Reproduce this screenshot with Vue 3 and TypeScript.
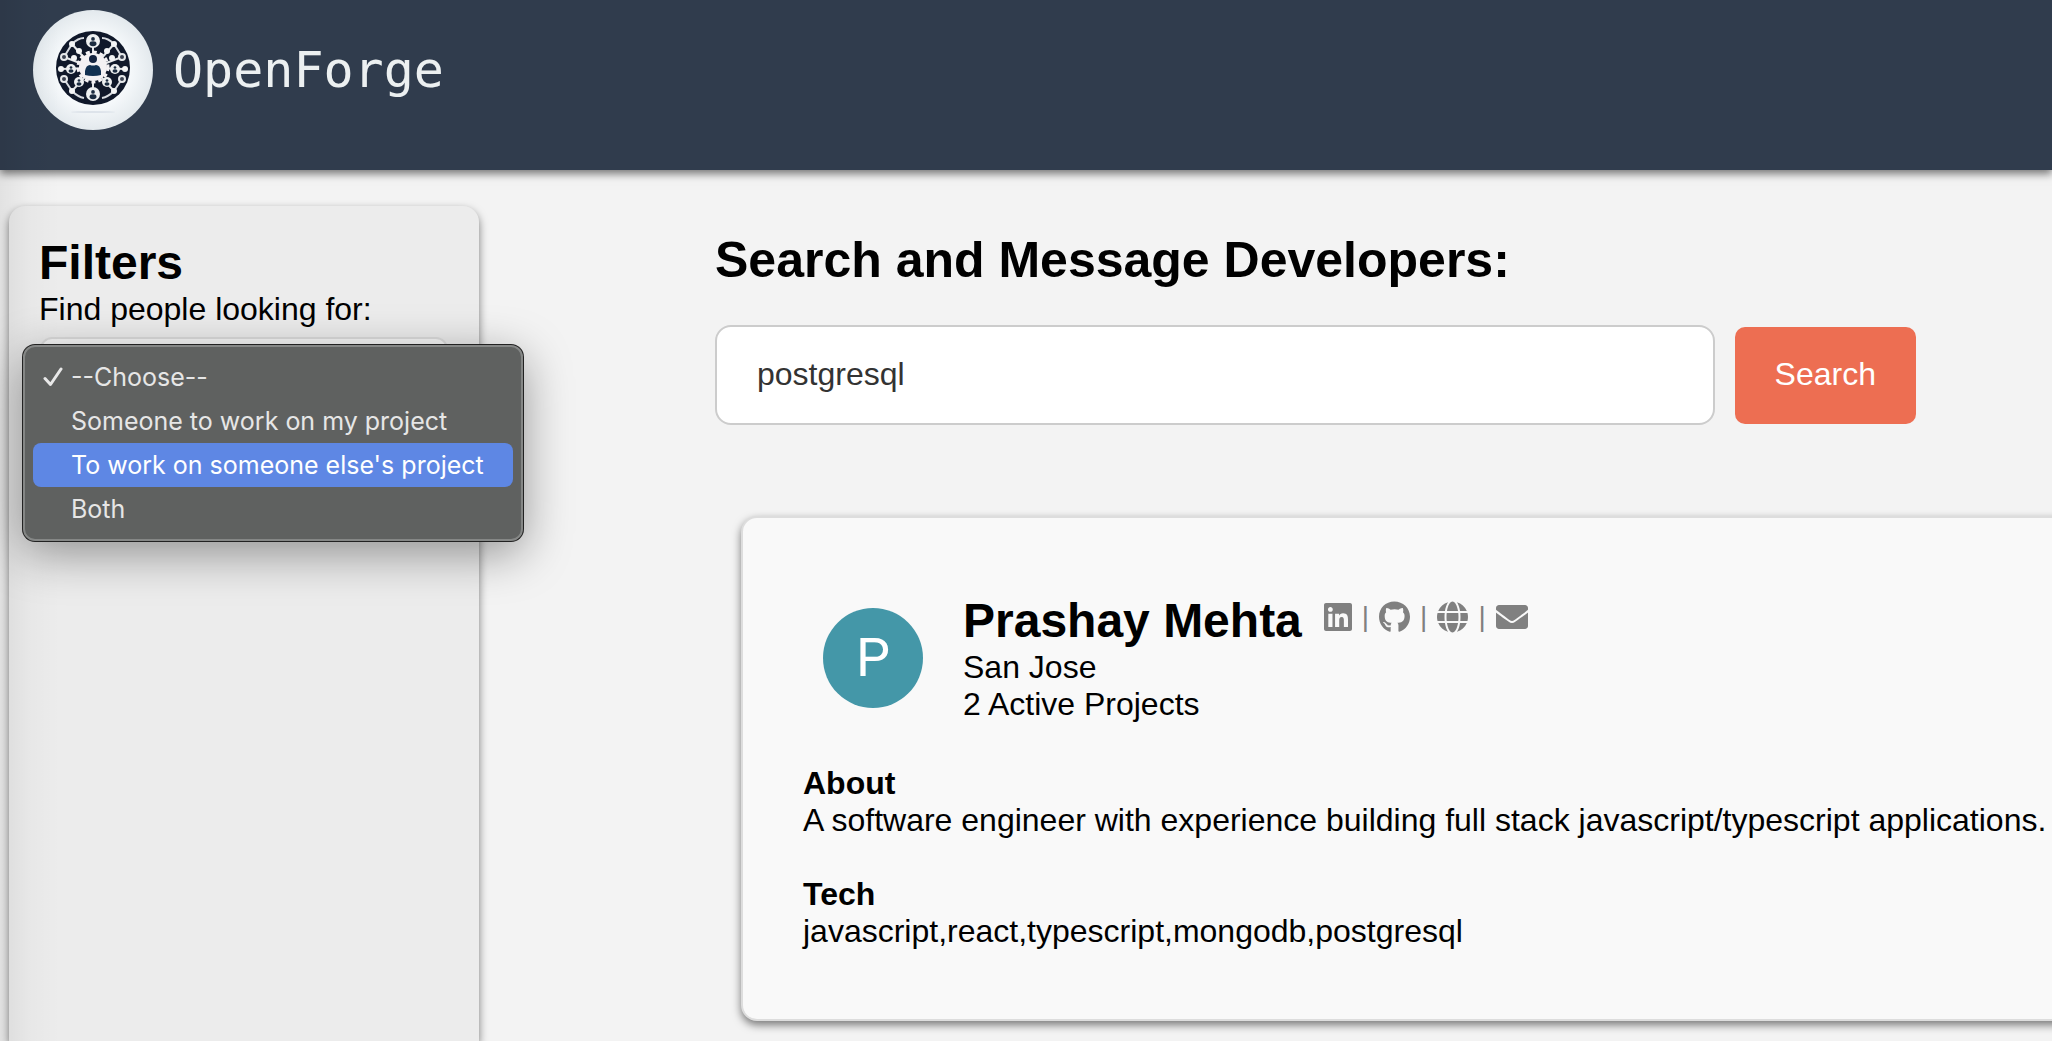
<script setup lang="ts">
import { ref } from 'vue'

interface Option {
  value: string
  label: string
}

interface ProfileLink {
  name: string
  viewBox: string
  width: number
  path: string
}

const options: Option[] = [
  { value: '', label: '--Choose--' },
  { value: 'find', label: 'Someone to work on my project' },
  { value: 'join', label: "To work on someone else's project" },
  { value: 'both', label: 'Both' },
]

const selected = ref('')
const hovered = ref('join')
const query = ref('postgresql')

const links: ProfileLink[] = [
  {
    name: 'LinkedIn',
    viewBox: '0 0 448 512',
    width: 28,
    path: 'M416 32H31.900C14.300 32 0 46.500 0 64.300v383.400C0 465.500 14.300 480 31.900 480H416c17.600 0 32-14.500 32-32.300V64.300c0-17.800-14.400-32.300-32-32.300zM135.400 416H69V202.200h66.500V416zm-33.200-243c-21.300 0-38.500-17.300-38.500-38.500S80.900 96 102.200 96c21.200 0 38.500 17.300 38.500 38.500 0 21.300-17.200 38.500-38.500 38.500zm282.100 243h-66.400V312c0-24.800-.5-56.700-34.500-56.700-34.600 0-39.900 27-39.900 54.900V416h-66.400V202.200h63.700v29.200h.9c8.900-16.800 30.600-34.500 62.900-34.500 67.200 0 79.700 44.300 79.700 101.900V416z',
  },
  {
    name: 'GitHub',
    viewBox: '0 0 496 512',
    width: 31,
    path: 'M165.900 397.400c0 2-2.300 3.600-5.200 3.600-3.300.3-5.600-1.300-5.600-3.600 0-2 2.300-3.600 5.200-3.600 3-.3 5.600 1.300 5.600 3.600zm-31.100-4.500c-.7 2 1.300 4.300 4.300 4.900 2.600 1 5.600 0 6.200-2s-1.300-4.300-4.300-5.200c-2.600-.7-5.500.3-6.200 2.300zm44.200-1.700c-2.900.7-4.900 2.600-4.600 4.900.3 2 2.900 3.300 5.900 2.600 2.900-.7 4.900-2.600 4.600-4.600-.3-1.900-3-3.200-5.900-2.900zM244.800 8C106.100 8 0 113.300 0 252c0 110.900 69.800 205.800 169.500 239.200 12.800 2.300 17.300-5.600 17.300-12.100 0-6.200-.3-40.400-.3-61.400 0 0-70 15-84.700-29.800 0 0-11.400-29.100-27.800-36.600 0 0-22.900-15.700 1.600-15.400 0 0 24.900 2 38.600 25.800 21.900 38.600 58.600 27.500 72.900 20.900 2.300-16 8.800-27.100 16-33.700-55.900-6.200-112.300-14.300-112.300-110.500 0-27.500 7.600-41.300 23.600-58.900-2.600-6.500-11.100-33.300 2.600-67.900 20.900-6.500 69 27 69 27 20-5.600 41.500-8.500 62.800-8.500s42.800 2.900 62.800 8.500c0 0 48.100-33.600 69-27 13.700 34.700 5.200 61.400 2.600 67.900 16 17.700 25.800 31.500 25.800 58.900 0 96.500-58.900 104.200-114.800 110.500 9.200 7.900 17 22.900 17 46.400 0 33.700-.3 75.400-.3 83.600 0 6.500 4.600 14.400 17.300 12.100C428.200 457.800 496 362.900 496 252 496 113.300 383.500 8 244.800 8z',
  },
  {
    name: 'Website',
    viewBox: '0 0 496 512',
    width: 31,
    path: 'M336.500 160C322 70.700 287.800 8 248 8s-74 62.700-88.500 152h177zM152 256c0 22.200 1.200 43.500 3.300 64h185.300c2.100-20.500 3.300-41.800 3.300-64s-1.200-43.500-3.300-64H155.300c-2.100 20.500-3.300 41.800-3.300 64zm324.700-96c-28.600-67.900-86.500-120.400-158-141.600 24.400 33.800 41.200 84.700 50 141.600h108zM177.200 18.400C105.800 39.600 47.800 92.100 19.300 160h108c8.700-56.900 25.500-107.800 49.900-141.600zM487.400 192H372.700c2.100 21 3.300 42.500 3.300 64s-1.200 43-3.300 64h114.600c5.500-20.500 8.600-41.800 8.600-64s-3.100-43.500-8.500-64zM120 256c0-21.500 1.200-43 3.300-64H8.600C3.200 212.500 0 233.800 0 256s3.200 43.500 8.600 64h114.600c-2-21-3.200-42.500-3.200-64zm39.500 96c14.500 89.300 48.700 152 88.500 152s74-62.700 88.500-152h-177zm159.300 141.600c71.400-21.200 129.400-73.700 158-141.600h-108c-8.800 56.900-25.600 107.800-50 141.600zM19.300 352c28.600 67.900 86.500 120.400 158 141.600-24.400-33.800-41.200-84.700-50-141.600h-108z',
  },
  {
    name: 'Email',
    viewBox: '0 0 512 512',
    width: 32,
    path: 'M502.300 190.800c3.900-3.100 9.700-.2 9.700 4.700V400c0 26.500-21.500 48-48 48H48c-26.500 0-48-21.500-48-48V195.600c0-5 5.700-7.800 9.700-4.700 22.400 17.400 52.100 39.500 154.100 113.600 21.100 15.400 56.700 47.800 92.200 47.600 35.700.3 72-32.800 92.300-47.600 102-74.100 131.600-96.300 154-113.700zM256 320c23.200.4 56.600-29.200 73.400-41.400 132.700-96.300 142.800-104.700 173.400-128.700 5.800-4.500 9.200-11.500 9.200-18.900v-19c0-26.500-21.500-48-48-48H48c-26.500 0-48 21.500-48 48v19c0 7.400 3.400 14.300 9.200 18.900 30.600 23.900 40.700 32.400 173.400 128.700 16.800 12.200 50.200 41.800 73.400 41.400z',
  },
]

const spokes = [
  [60, 58, 60, 32], [60, 58, 60, 84], [60, 58, 28, 59], [60, 58, 92, 59],
  [60, 58, 39, 34], [60, 58, 81, 34], [60, 58, 39, 81], [60, 58, 81, 81],
  [60, 58, 31, 47], [60, 58, 89, 47],
]
const nodes = [
  [60, 31, 7], [60, 84, 7], [38, 59, 5], [82, 59, 5], [46, 72, 5], [74, 72, 5],
]
const rings = [[31, 47], [89, 47], [31, 69], [89, 69]]
const dots = [
  [39, 34], [81, 34], [39, 81], [81, 81], [28, 59], [92, 59], [46, 41], [74, 41], [41, 48], [79, 48],
]
</script>

<template>
  <div class="page">
    <header class="topbar">
      <svg class="logo" viewBox="0 0 120 120" role="img" aria-label="OpenForge logo">
        <defs>
          <radialGradient id="plate">
            <stop offset="0.6" stop-color="#f6f9fb" />
            <stop offset="1" stop-color="#e3e9ed" />
          </radialGradient>
        </defs>
        <circle cx="60" cy="60" r="60" fill="url(#plate)" />
        <ellipse cx="60" cy="102" rx="22" ry="1" fill="#dde3ea" />
        <circle cx="60" cy="58" r="37" fill="#10182a" />
        <g stroke="#e6e8ea" stroke-width="2">
          <line v-for="(s, i) in spokes" :key="i" :x1="s[0]" :y1="s[1]" :x2="s[2]" :y2="s[3]" />
        </g>
        <g fill="none" stroke="#d8dbe0" stroke-width="2">
          <path d="M39 34Q45 28 51 28M69 28Q75 28 81 34M39 81Q45 87 51 88M69 88Q75 87 81 81" />
          <path d="M39 34L31 47M81 34L89 47M39 81L31 69M81 81L89 69" />
        </g>
        <circle cx="60" cy="57" r="14" fill="#f4f1f3" />
        <circle cx="60" cy="57" r="15" fill="none" stroke="#f4f1f3" stroke-width="3" stroke-dasharray="4 3" />
        <g v-for="(n, i) in nodes" :key="i">
          <circle :cx="n[0]" :cy="n[1]" :r="n[2]" fill="#eef0f1" />
          <circle :cx="n[0]" :cy="n[1] - n[2] * 0.3" :r="n[2] * 0.27" fill="#1b2b40" />
          <ellipse :cx="n[0]" :cy="n[1] + n[2] * 0.4" :rx="n[2] * 0.5" :ry="n[2] * 0.35" fill="#1b2b40" />
        </g>
        <circle v-for="(r, i) in rings" :key="i" :cx="r[0]" :cy="r[1]" r="3" fill="#3a4150" stroke="#e6e8ea" stroke-width="2" />
        <circle v-for="(d, i) in dots" :key="i" :cx="d[0]" :cy="d[1]" r="3" fill="#f3f4f5" />
        <circle cx="60" cy="49" r="4" fill="#14233f" />
        <path d="M52 65v-4q1-6 5-6q3 1 6 0q4 0 5 6v4q-8 2-16 0z" fill="#123050" />
      </svg>
      <span class="brand">OpenForge</span>
    </header>

    <div class="content">
      <aside class="filters">
        <h2 class="title">Filters</h2>
        <label class="line" for="looking">Find people looking for:</label>
        <div class="picker">
          <select id="looking" v-model="selected" class="select">
            <option v-for="o in options" :key="o.value" :value="o.value">{{ o.label }}</option>
          </select>
          <div class="menu" role="listbox" aria-label="Find people looking for">
            <button
              v-for="o in options"
              :key="o.value"
              type="button"
              role="option"
              class="item"
              :class="{ active: o.value === hovered }"
              :aria-selected="o.value === selected"
              @mouseenter="hovered = o.value"
              @click="selected = o.value"
            >
              <span class="tick">
                <svg v-if="o.value === selected" viewBox="0 0 20 20" width="20" height="20" aria-hidden="true">
                  <path d="M2 11.500L7.500 17.500L18 2" fill="none" stroke="#e8e8e8" stroke-width="3" stroke-linecap="round" stroke-linejoin="round" />
                </svg>
              </span>
              {{ o.label }}
            </button>
          </div>
        </div>
      </aside>

      <main class="main">
        <h1 class="heading"><label for="query">Search and Message Developers:</label></h1>
        <form class="search" @submit.prevent>
          <input id="query" v-model="query" class="query" type="text" />
          <button class="submit" type="submit">Search</button>
        </form>

        <article class="card">
          <div class="profile">
            <div class="avatar">P</div>
            <div>
              <div class="who">
                <h2 class="title">Prashay Mehta</h2>
                <nav class="links" aria-label="Profile links">
                  <template v-for="(l, i) in links" :key="l.name">
                    <span v-if="i > 0" class="bar">|</span>
                    <a href="#" :aria-label="l.name">
                      <svg :viewBox="l.viewBox" :width="l.width" height="32"><path :d="l.path" /></svg>
                    </a>
                  </template>
                </nav>
              </div>
              <p class="line">San Jose</p>
              <p class="line">2 Active Projects</p>
            </div>
          </div>
          <section class="section">
            <h3 class="line">About</h3>
            <p class="line">A software engineer with experience building full stack javascript/typescript applications.</p>
          </section>
          <section class="section">
            <h3 class="line">Tech</h3>
            <p class="line">javascript,react,typescript,mongodb,postgresql</p>
          </section>
        </article>
      </main>
    </div>
    <div class="edge"></div>
  </div>
</template>

<style>
body {
  margin: 0;
  background: #f3f3f3;
}
</style>

<style scoped>
.page {
  position: relative;
  display: flex;
  flex-direction: column;
  min-height: 100vh;
  overflow: hidden;
  background: #f3f3f3;
  color: #000;
  font-family: "Liberation Sans", Arial, Helvetica, sans-serif;
  font-size: 32px;
}

.page *,
.page {
  box-sizing: border-box;
}

h1,
h2,
h3,
p {
  margin: 0;
}

.topbar {
  display: flex;
  align-items: center;
  gap: 20px;
  padding: 10px 33px 40px;
  background: #303c4d;
  box-shadow: 0 4px 8px rgba(0, 0, 0, 0.5);
}

.logo {
  width: 120px;
  height: 120px;
}

.brand {
  color: #ecf0f1;
  font-family: "DejaVu Sans Mono", Menlo, monospace;
  font-size: 50px;
  line-height: 60px;
}

.content {
  display: flex;
  flex: 1;
}

.filters {
  flex: 0 0 470px;
  margin: 36px 0 0 9px;
  padding: 30px;
  border-radius: 16px 16px 0 0;
  background: #ececec;
  box-shadow: 0 4px 8px rgba(0, 0, 0, 0.5);
}

.title {
  margin-bottom: 1px;
  font-size: 48px;
  line-height: 54px;
  white-space: nowrap;
}

.line {
  display: block;
  font-size: 32px;
  line-height: 37px;
}

.picker {
  position: relative;
  margin: 9px 1px 0;
}

.select {
  display: block;
  width: 100%;
  height: 72px;
  padding: 0 16px;
  border: 2px solid #ddd;
  border-radius: 12px;
  background: #f8f8f8;
  font: inherit;
}

.menu {
  position: absolute;
  z-index: 2;
  top: 8px;
  left: -17px;
  padding: 8px;
  border: 2px solid #858786;
  border-radius: 12px;
  background: #5f6160;
  box-shadow: 0 0 0 1px #222, 0 12px 48px rgba(0, 0, 0, 0.4);
}

.item {
  display: flex;
  align-items: center;
  width: 480px;
  height: 44px;
  padding: 0 10px;
  border: 0;
  border-radius: 8px;
  background: none;
  color: #e6e6e6;
  font-family: Inter, sans-serif;
  font-size: 25px;
  line-height: 44px;
  white-space: nowrap;
}

.item.active {
  background: #5e87e4;
  color: #fff;
}

.tick {
  display: flex;
  flex: 0 0 28px;
}

.main {
  flex: 1;
  min-width: 0;
  margin-left: 236px;
  padding: 62px 0 18px;
}

.heading {
  font-size: 50px;
  line-height: 56px;
}

.search {
  display: flex;
  align-items: center;
  gap: 20px;
  margin: 37px 136px 91px 0;
}

.query {
  flex: 1;
  min-width: 0;
  height: 100px;
  padding: 0 40px 2px;
  border: 2px solid #ccc;
  border-radius: 16px;
  background: #fff;
  color: #333;
  font: inherit;
}

.submit {
  height: 97px;
  padding: 0 40px 2px;
  border: 0;
  border-radius: 10px;
  background: #ed6e52;
  color: #fff;
  font: inherit;
}

.card {
  margin: 0 -80px 0 26px;
  padding: 76px 60px 69px;
  border: 2px solid #ddd;
  border-radius: 16px;
  background: #f9f9f9;
  box-shadow: 0 4px 8px rgba(0, 0, 0, 0.5);
}

.profile {
  display: flex;
  gap: 40px;
  padding-left: 20px;
}

.avatar {
  flex: none;
  width: 100px;
  height: 100px;
  margin-top: 14px;
  border-radius: 50%;
  background: #4497a8;
  color: #fff;
  font-family: Roboto, sans-serif;
  font-size: 54px;
  line-height: 100px;
  text-align: center;
}

.who {
  display: flex;
  gap: 22px;
}

.links {
  display: flex;
  align-items: center;
  gap: 10px;
  height: 46px;
  color: #808080;
}

.links a {
  display: flex;
  color: inherit;
}

.links svg {
  fill: currentColor;
}

.bar {
  font-size: 28px;
  line-height: 32px;
}

.section {
  margin-top: 37px;
}

.profile + .section {
  margin-top: 42px;
}

.section .line {
  white-space: nowrap;
}

.edge {
  position: absolute;
  top: 0;
  bottom: 0;
  left: 0;
  width: 60px;
  background: linear-gradient(to right, rgba(0, 0, 0, 0.07), rgba(0, 0, 0, 0.02) 50%, transparent);
  pointer-events: none;
}
</style>
